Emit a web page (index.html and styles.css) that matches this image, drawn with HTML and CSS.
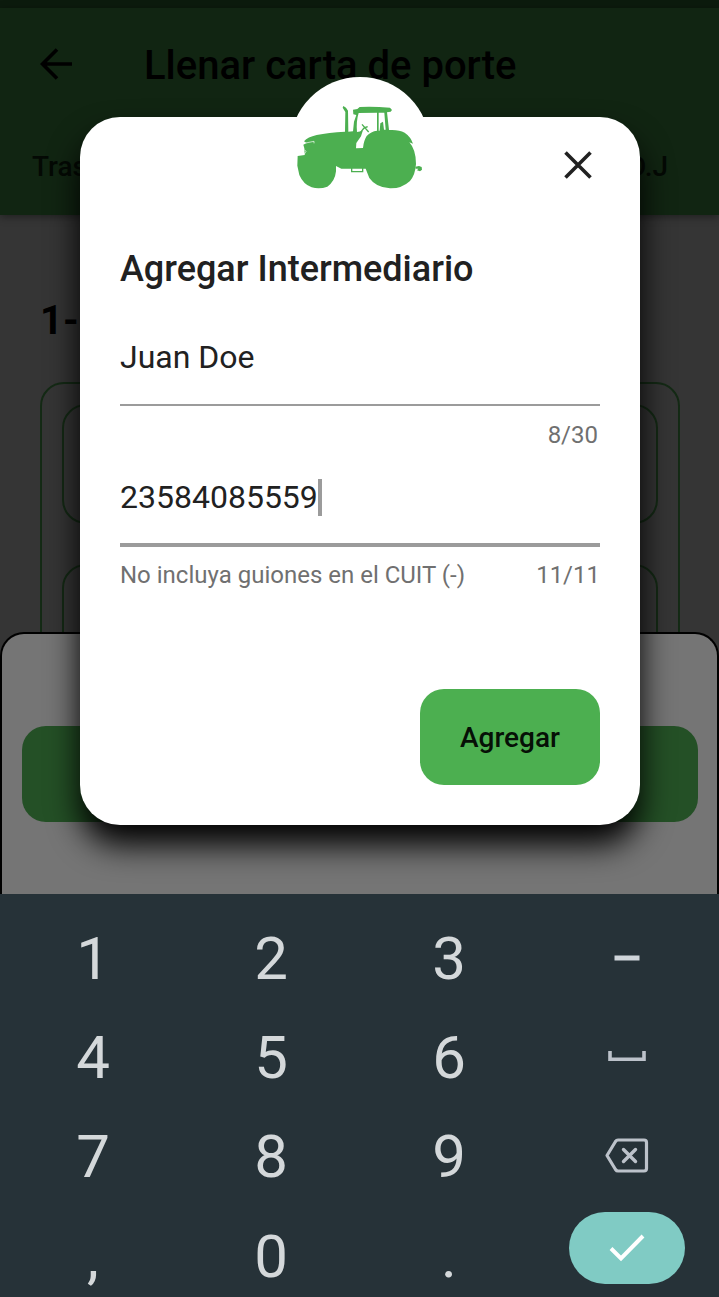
FILE: index.html
```html
<!DOCTYPE html>
<html lang="es">
<head>
<meta charset="utf-8">
<title>Llenar carta de porte</title>
<link rel="stylesheet" href="styles.css">
</head>
<body>
<div class="screen">
  <div class="status-bar"></div>
  <header class="app-bar">
    <div class="app-bar-row">
      <svg class="back" viewBox="0 0 32 32"><path d="M17 1.500 2.500 16 17 30.500M2.500 16H32" fill="none" stroke="#000" stroke-width="3.600"/></svg>
      <h1 class="app-title">Llenar carta de porte</h1>
    </div>
    <nav class="tabs"><span>Tras</span><span>D.J</span></nav>
  </header>
  <main class="content">
    <h2 class="section-title">1-</h2>
    <div class="group">
      <div class="field-box"></div>
      <div class="field-box"></div>
    </div>
  </main>
  <section class="sheet"><div class="sheet-button"></div></section>

  <section class="keypad">
    <div class="key">1</div><div class="key">2</div><div class="key">3</div>
    <div class="key key-icon"><svg width="26" height="6" viewBox="0 0 26 6"><path d="M.5 .5h25v5H.5z" fill="#cfd5da"/></svg></div>
    <div class="key">4</div><div class="key">5</div><div class="key">6</div>
    <div class="key key-space"><svg width="38" height="10" viewBox="0 0 38 10"><path d="M2 0v8.200h34V0" fill="none" stroke="#bcc2ca" stroke-width="3.600"/></svg></div>
    <div class="key">7</div><div class="key">8</div><div class="key">9</div>
    <div class="key key-icon"><svg width="44" height="35" viewBox="0 0 44 35"><path d="M13 2H39Q41.500 2 41.500 4.500V30.500Q41.500 33 39 33H13Q11.500 33 10.500 31.500L2 17.500 10.500 3.500Q11.500 2 13 2Z" fill="none" stroke="#bcc2ca" stroke-width="3.200" stroke-linejoin="round"/><path d="M18.500 11.500l12 12M30.500 11.500l-12 12" stroke="#bcc2ca" stroke-width="3.400" stroke-linecap="round"/></svg></div>
    <div class="key">,</div><div class="key">0</div><div class="key">.</div>
    <div class="key key-enter"><div class="enter"><svg width="36" height="28" viewBox="0 0 36 28"><path d="M2 14.500 12 24.500 34 2" fill="none" stroke="#fff" stroke-width="4"/></svg></div></div>
  </section>

  <div class="dialog" role="dialog">
    <div class="avatar">
      <svg viewBox="30 21 420 420" fill="#4caf50">
        <path d="M73 235 70 224 80 219 72 214Q83 201 110 195Q145 187 195 185L196 126 188 113 190 108 198 113 204 122 205 185 219 184 222 155 229 135 220 133 219 119 232 117 239 111Q280 109 330 113L336 120 332 125 321 127 327 180Q356 178 374 188Q392 200 399 221L388 217Q408 239 408 282Q406 314 390 333Q365 356 330 355Q288 353 268 324L257 296H184L168 288 168 304Q165 334 142 350Q119 358 95 352Q70 343 58 315L52 287 53 258 74 255Z"/>
        <path fill="#fff" d="M236 129 291 128V182Q273 184 260 198Q251 212 249 234L228 235 229 219 243 199 248 183 231 186Q228 154 236 129ZM296 128H313L317 179H312L309 155 301 160 299 182H296Z"/>
        <path fill="none" stroke="#4caf50" stroke-width="4" d="M215 294V305H248V294M241 188 252 174M246 163 266 186M252 174 263 170"/>
        <path d="M406 290 417 288 425 291 426 299 420 304 411 301 415 296 407 296Z"/>
        <path fill="none" stroke="#fff" stroke-width="2" d="M77 219 102 214 102 220M73 239 78 244 72 254"/>
      </svg>
    </div>
    <svg class="close" viewBox="0 0 28 28"><path d="M1.500 1.500l25 25M26.500 1.500l-25 25" stroke="#212121" stroke-width="3.600"/></svg>
    <h2 class="dialog-title">Agregar Intermediario</h2>
    <div class="input">Juan Doe</div>
    <div class="helper"><span></span><span class="count">8/30</span></div>
    <div class="input focused">23584085559<i class="caret"></i></div>
    <div class="helper"><span>No incluya guiones en el CUIT (-)</span><span>11/11</span></div>
    <button class="submit">Agregar</button>
  </div>
</div>
</body>
</html>
```

FILE: styles.css
```css
* { box-sizing: border-box; }
body { margin: 0; font-family: Roboto, sans-serif; }
h1, h2 { margin: 0; }

.screen {
  position: relative;
  display: flex;
  flex-direction: column;
  width: 719px;
  height: 1297px;
  overflow: hidden;
  background: #353535;
}

.status-bar { height: 8px; background: #0c1b0d; }
.app-bar {
  position: relative;
  height: 207px;
  background: #112512;
  box-shadow: 0 2px 8px rgba(0, 0, 0, .4);
}
.app-bar-row {
  display: flex;
  align-items: center;
  gap: 72px;
  height: 112px;
  padding-left: 40px;
}
.back { width: 32px; height: 32px; }
.app-title { font-size: 40px; font-weight: 500; line-height: 48px; padding-top: 4px; }
.tabs {
  display: flex;
  justify-content: space-between;
  padding: 31px 51px 0 32px;
  color: #040904;
  font-size: 28px;
  font-weight: 500;
  line-height: 32px;
}

.content { height: 417px; padding: 82px 39px 0 40px; overflow: hidden; }
.section-title { font-size: 40px; line-height: 48px; height: 85px; font-weight: 700; }
.group {
  display: flex;
  flex-direction: column;
  gap: 40px;
  height: 500px;
  padding: 20px;
  border: 2px solid #142a15;
  border-radius: 24px;
}
.field-box { flex: none; height: 120px; border: 2px solid #142a15; border-radius: 24px; }

.sheet {
  height: 262px;
  padding: 92px 19px 0 20px;
  background: #757575;
  border: 2px solid #000;
  border-bottom: 0;
  border-radius: 24px 24px 0 0;
}
.sheet-button { height: 96px; background: #245026; border-radius: 24px; }

.keypad {
  display: grid;
  grid-template-columns: repeat(4, 1fr);
  grid-template-rows: repeat(4, 99.2px);
  height: 403px;
  padding: 15px 3px 0 4px;
  background: #263238;
  color: #d4d8da;
  font-size: 60px;
}
.key { display: flex; align-items: center; justify-content: center; }
.key-icon { padding-bottom: 2px; }
.key-space { padding-bottom: 4px; }
.key-enter { padding: 0 1px 17px 0; }
.enter {
  display: flex;
  align-items: center;
  justify-content: center;
  width: 116px;
  height: 72px;
  background: #80cbc4;
  border-radius: 36px;
}

.dialog {
  position: absolute;
  left: 80px;
  top: 117px;
  display: flex;
  flex-direction: column;
  width: 560px;
  height: 708px;
  padding: 128px 40px 40px;
  background: #fff;
  border-radius: 40px;
  box-shadow: 0 20px 32px #000;
  color: #212121;
}
.avatar {
  position: absolute;
  left: 210px;
  top: -40px;
  width: 140px;
  height: 140px;
  background: #fff;
  border-radius: 50%;
}
.avatar svg { display: block; width: 140px; height: 140px; }
.close { position: absolute; left: 484px; top: 34px; width: 28px; height: 28px; }
.dialog-title { font-size: 36px; font-weight: 500; line-height: 48px; }
.input {
  display: flex;
  align-items: center;
  height: 96px;
  margin-top: 17px;
  border-bottom: 2px solid #9b9b9b;
  font-size: 32px;
}
.input.focused { height: 98px; margin-top: 0; padding-top: 2px; border-bottom-width: 4px; }
.caret { width: 4px; height: 37px; background: #9b9b9b; }
.helper {
  display: flex;
  justify-content: space-between;
  height: 43px;
  padding-top: 15px;
  color: #707070;
  font-size: 24px;
  line-height: 28px;
}
.input.focused + .helper { padding-top: 14px; }
.count { padding-right: 2px; }
.submit {
  align-self: flex-end;
  width: 180px;
  height: 96px;
  margin-top: auto;
  border: 0;
  border-radius: 24px;
  background: #4caf50;
  color: #061006;
  font: 500 28px Roboto, sans-serif;
}
```
